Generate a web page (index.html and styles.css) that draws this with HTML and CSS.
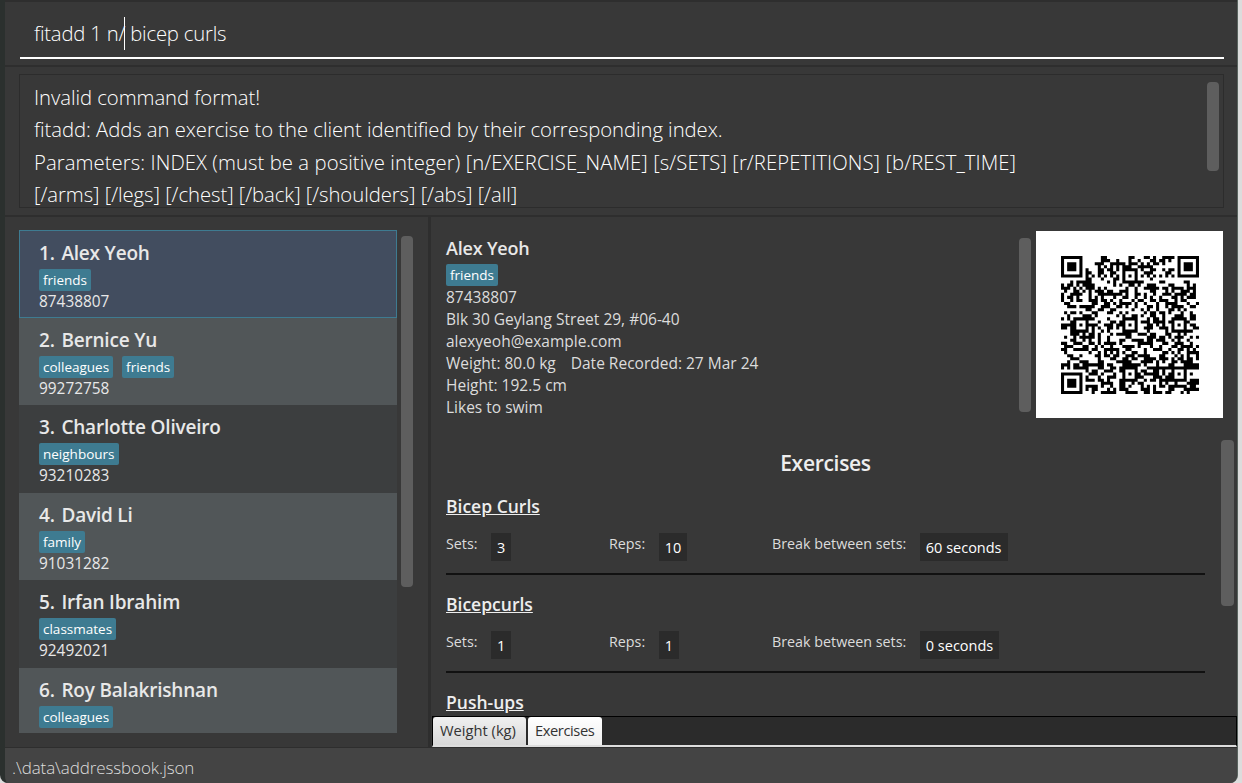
FILE: index.html
```html
<!DOCTYPE html>
<html lang="en">
<head>
  <meta charset="UTF-8">
  <title>FitBook</title>
  <link rel="stylesheet" href="styles.css">
</head>
<body>
  <div class="window">
    <div class="command-box">
      <div class="command-input">fitadd 1 n/<span class="caret"></span> bicep curls</div>
    </div>

    <div class="result-box">
      <div class="result-text">
        <div>Invalid command format!</div>
        <div>fitadd: Adds an exercise to the client identified by their corresponding index.</div>
        <div class="result-params">Parameters: INDEX (must be a positive integer) [n/EXERCISE_NAME] [s/SETS] [r/REPETITIONS] [b/REST_TIME]</div>
        <div>[/arms] [/legs] [/chest] [/back] [/shoulders] [/abs] [/all]</div>
        <div class="thumb result-thumb"></div>
      </div>
    </div>

    <div class="main">
      <div class="list-pane">
        <div class="person-list">
          <div class="person selected">
            <div class="person-name"><span class="person-index">1.</span> Alex Yeoh</div>
            <div class="tags"><span class="tag">friends</span></div>
            <div class="phone">87438807</div>
          </div>
          <div class="person odd">
            <div class="person-name"><span class="person-index">2.</span> Bernice Yu</div>
            <div class="tags"><span class="tag">colleagues</span><span class="tag">friends</span></div>
            <div class="phone">99272758</div>
          </div>
          <div class="person">
            <div class="person-name"><span class="person-index">3.</span> Charlotte Oliveiro</div>
            <div class="tags"><span class="tag">neighbours</span></div>
            <div class="phone">93210283</div>
          </div>
          <div class="person odd">
            <div class="person-name"><span class="person-index">4.</span> David Li</div>
            <div class="tags"><span class="tag">family</span></div>
            <div class="phone">91031282</div>
          </div>
          <div class="person">
            <div class="person-name"><span class="person-index">5.</span> Irfan Ibrahim</div>
            <div class="tags"><span class="tag">classmates</span></div>
            <div class="phone">92492021</div>
          </div>
          <div class="person odd">
            <div class="person-name"><span class="person-index">6.</span> Roy Balakrishnan</div>
            <div class="tags"><span class="tag">colleagues</span></div>
          </div>
        </div>
        <div class="thumb list-thumb"></div>
      </div>

      <div class="detail-pane">
        <div class="profile">
          <div class="profile-info">
            <div class="profile-name">Alex Yeoh</div>
            <div class="tags"><span class="tag">friends</span></div>
            <div>87438807</div>
            <div>Blk 30 Geylang Street 29, #06-40</div>
            <div>alexyeoh@example.com</div>
            <div>Weight: 80.0 kg <span class="recorded">Date Recorded: 27 Mar 24</span></div>
            <div>Height: 192.5 cm</div>
            <div>Likes to swim</div>
          </div>
          <div class="thumb profile-thumb"></div>
          <div class="qr-panel">
            <svg id="qr" class="qr" viewBox="0 0 45 45"></svg>
          </div>
        </div>

        <div class="exercises">
          <h2 class="exercises-title">Exercises</h2>

          <div class="exercise">
            <div class="exercise-name">Bicep Curls</div>
            <div class="exercise-stats">
              <div class="stat"><span class="stat-label">Sets:</span><span class="stat-value">3</span></div>
              <div class="stat"><span class="stat-label">Reps:</span><span class="stat-value">10</span></div>
              <div class="stat"><span class="stat-label">Break between sets:</span><span class="stat-value">60 seconds</span></div>
            </div>
          </div>

          <div class="exercise">
            <div class="exercise-name">Bicepcurls</div>
            <div class="exercise-stats">
              <div class="stat"><span class="stat-label">Sets:</span><span class="stat-value">1</span></div>
              <div class="stat"><span class="stat-label">Reps:</span><span class="stat-value">1</span></div>
              <div class="stat"><span class="stat-label">Break between sets:</span><span class="stat-value">0 seconds</span></div>
            </div>
          </div>

          <div class="exercise">
            <div class="exercise-name">Push-ups</div>
          </div>

          <div class="thumb exercises-thumb"></div>
        </div>

        <div class="tab-bar">
          <div class="tab">Weight (kg)</div>
          <div class="tab active">Exercises</div>
        </div>
      </div>
    </div>

    <div class="status-bar">.\data\addressbook.json</div>
  </div>
  <script src="qr.js"></script>
</body>
</html>
```

FILE: styles.css
```css
body {
  margin: 0;
  height: 783px;
  overflow: hidden;
  background-color: #dcdcdc;
  font-family: "Open Sans", sans-serif;
}

.window {
  display: flex;
  flex-direction: column;
  box-sizing: border-box;
  width: 1238px;
  height: 783px;
  background-color: #383838;
  border-left: 5px solid #2b302e;
  border-right: 1px solid #59645f;
  border-bottom-right-radius: 8px;
  border-bottom-left-radius: 8px;
  overflow: hidden;
}

/* command box */
.command-box {
  box-sizing: border-box;
  height: 67px;
  padding: 0 13px 0 15px;
  border-top: 2px solid #2e2e2e;
  border-bottom: 2px solid #2e2e2e;
}

.command-input {
  box-sizing: border-box;
  height: 57px;
  padding: 15px 17px 0 14px;
  border-bottom: 2px solid #fff;
  color: #fff;
  font-size: 20.3px;
  font-weight: 300;
  line-height: 33px;
  letter-spacing: -0.2px;
  white-space: pre;
}

.caret {
  display: inline-block;
  width: 1px;
  height: 33px;
  margin-left: -1px;
  background-color: #fff;
  vertical-align: top;
}

/* result box */
.result-box {
  height: 150px;
  box-sizing: border-box;
  padding: 7px 13px 8px 14px;
  border-bottom: 2px solid #2e2e2e;
}

.result-text {
  position: relative;
  height: 134px;
  box-sizing: border-box;
  padding: 6px 14px 0;
  border: 1px solid #2c2c2c;
  overflow: hidden;
  color: #fff;
  font-size: 20.3px;
  font-weight: 300;
  line-height: 32.4px;
  letter-spacing: -0.05px;
  white-space: nowrap;
}

.result-params {
  letter-spacing: 0.07px;
}

/* scrollbar thumbs */
.thumb {
  position: absolute;
  width: 12px;
  background-color: #5e5e5e;
  border-radius: 4px;
}

.result-thumb {
  top: 7px;
  right: 4px;
  height: 89px;
}

/* main */
.main {
  display: flex;
  flex: 1;
  min-height: 0;
}

.list-pane {
  position: relative;
  box-sizing: border-box;
  width: 426px;
  padding: 13px 0 0 14px;
  border-right: 3px solid #2e2e2e;
}

.person-list {
  width: 378px;
  height: 503px;
  overflow: hidden;
}

.person {
  box-sizing: border-box;
  height: 87.6px;
  padding: 7px 20px 0;
  background-color: #3c3e3f;
  color: #e8e8e8;
}

.person.odd {
  background-color: #515658;
}

.person.selected {
  padding: 7px 19px 0;
  background-color: #424d5f;
  border: 1px solid #3e7b91;
}

.person-name {
  font-size: 19px;
  font-weight: 600;
  line-height: 30px;
  letter-spacing: -0.2px;
}

.person-index {
  margin-right: 2px;
}

.tags {
  display: flex;
  gap: 9px;
  margin-top: 1px;
}

.tag {
  height: 22px;
  padding: 0 4px;
  background-color: #3e7b91;
  border-radius: 2px;
  color: #fff;
  font-size: 13.5px;
  line-height: 22px;
}

.phone {
  font-size: 15.4px;
  line-height: 21px;
}

.list-thumb {
  top: 19px;
  left: 396px;
  height: 351px;
}

/* detail */
.detail-pane {
  display: flex;
  flex-direction: column;
  flex: 1;
  min-width: 0;
}

.profile {
  position: relative;
  display: flex;
  justify-content: space-between;
  height: 216px;
  box-sizing: border-box;
  padding: 14px 14px 0 15px;
}

.profile-info {
  color: #dcdcdc;
  font-size: 15.5px;
  line-height: 22px;
}

.profile-name {
  color: #e8e8e8;
  font-size: 18px;
  font-weight: 600;
  line-height: 34px;
  letter-spacing: -0.2px;
}

.profile-info .tags {
  margin: -1px 0 0;
}

.recorded {
  margin-left: 11px;
}

.profile-thumb {
  top: 21px;
  left: 588px;
  height: 174px;
}

.qr-panel {
  display: flex;
  align-items: center;
  justify-content: center;
  width: 187px;
  height: 187px;
  background-color: #fff;
}

.qr {
  width: 138px;
  height: 138px;
}

.exercises {
  position: relative;
  flex: 1;
  min-height: 0;
  padding: 0 32px 0 15px;
  overflow: hidden;
}

.exercises-title {
  margin: 0;
  padding-top: 16px;
  color: #eee;
  font-size: 21px;
  font-weight: 600;
  line-height: 28px;
  letter-spacing: -0.3px;
  text-align: center;
}

.exercises-thumb {
  top: 7px;
  right: 3px;
  width: 13px;
  height: 166px;
}

.exercise {
  padding-top: 17px;
  height: 98px;
  box-sizing: border-box;
  border-bottom: 2px solid #111;
}

.exercise:last-of-type {
  border-bottom: none;
}

.exercise-name {
  color: #eee;
  font-size: 17.5px;
  font-weight: 600;
  line-height: 24px;
  text-decoration: underline;
}

.exercise-stats {
  display: grid;
  grid-template-columns: 163px 163px auto;
  margin-top: 15px;
}

.stat {
  display: flex;
  align-items: flex-start;
  gap: 13.5px;
}

.stat-label {
  color: #dcdcdc;
  font-size: 14.3px;
  line-height: 22px;
}

.stat-value {
  height: 28px;
  padding: 0 6px;
  background-color: #2b2b2b;
  color: #fff;
  font-size: 14.5px;
  line-height: 30px;
}

.tab-bar {
  display: flex;
  gap: 2px;
  height: 31px;
  box-sizing: border-box;
  margin-left: 1px;
  background-color: #2b2b2b;
  border-top: 1px solid #000;
  border-left: 1px solid #000;
  border-right: 1px solid #000;
  border-bottom: 2px solid #ddd;
}

.tab {
  display: flex;
  align-items: center;
  box-sizing: border-box;
  padding: 0 10px 2px 7px;
  background: linear-gradient(#f0f0f0, #d8d8d8);
  border-radius: 3px 3px 0 0;
  color: #333;
  font-size: 14.7px;
}

.tab.active {
  padding-right: 8px;
  background: linear-gradient(#fff, #efefef);
  letter-spacing: -0.4px;
}

.status-bar {
  box-sizing: border-box;
  height: 36px;
  padding: 6px 0 0 7px;
  background-color: #444;
  border-top: 1px solid #2e2e2e;
  color: #ddd;
  font-size: 17px;
  font-weight: 300;
  line-height: 28px;
  letter-spacing: -0.1px;
}
```

FILE: qr.js
```js
// draws the client's qr code as one svg path
var size = 45;
var seed = 20240327;
var cells = [];

function nextBit() {
  seed = (seed * 1103515245 + 12345) & 0x7fffffff;
  return (seed >> 16) & 1;
}

for (var y = 0; y < size; y++) {
  cells.push([]);
  for (var x = 0; x < size; x++) {
    cells[y].push(nextBit());
  }
}

function stamp(left, top, radius) {
  for (var y = -radius - 1; y <= radius + 1; y++) {
    for (var x = -radius - 1; x <= radius + 1; x++) {
      var row = top + radius + y;
      var col = left + radius + x;
      if (!cells[row] || cells[row][col] === undefined) continue;
      var d = Math.max(Math.abs(x), Math.abs(y));
      if (radius === 3) cells[row][col] = d === 2 || d === 4 ? 0 : 1;
      else if (d <= 2) cells[row][col] = d === 1 ? 0 : 1;
    }
  }
}

// timing lines first, the patterns go over them
for (var i = 0; i < size; i++) {
  cells[6][i] = i % 2 ? 0 : 1;
  cells[i][6] = i % 2 ? 0 : 1;
}

var centers = [6, 22, 38];
centers.forEach(function (cy, a) {
  centers.forEach(function (cx, b) {
    if ((a === 0 && b === 0) || (a === 0 && b === 2) || (a === 2 && b === 0)) return;
    stamp(cx - 2, cy - 2, 2);
  });
});

stamp(0, 0, 3);
stamp(38, 0, 3);
stamp(0, 38, 3);

var d = "";
for (var r = 0; r < size; r++) {
  for (var c = 0; c < size; c++) {
    if (cells[r][c]) d += "M" + c + " " + r + "h1v1h-1z";
  }
}

var path = document.createElementNS("http://www.w3.org/2000/svg", "path");
path.setAttribute("d", d);
document.getElementById("qr").appendChild(path);
```
